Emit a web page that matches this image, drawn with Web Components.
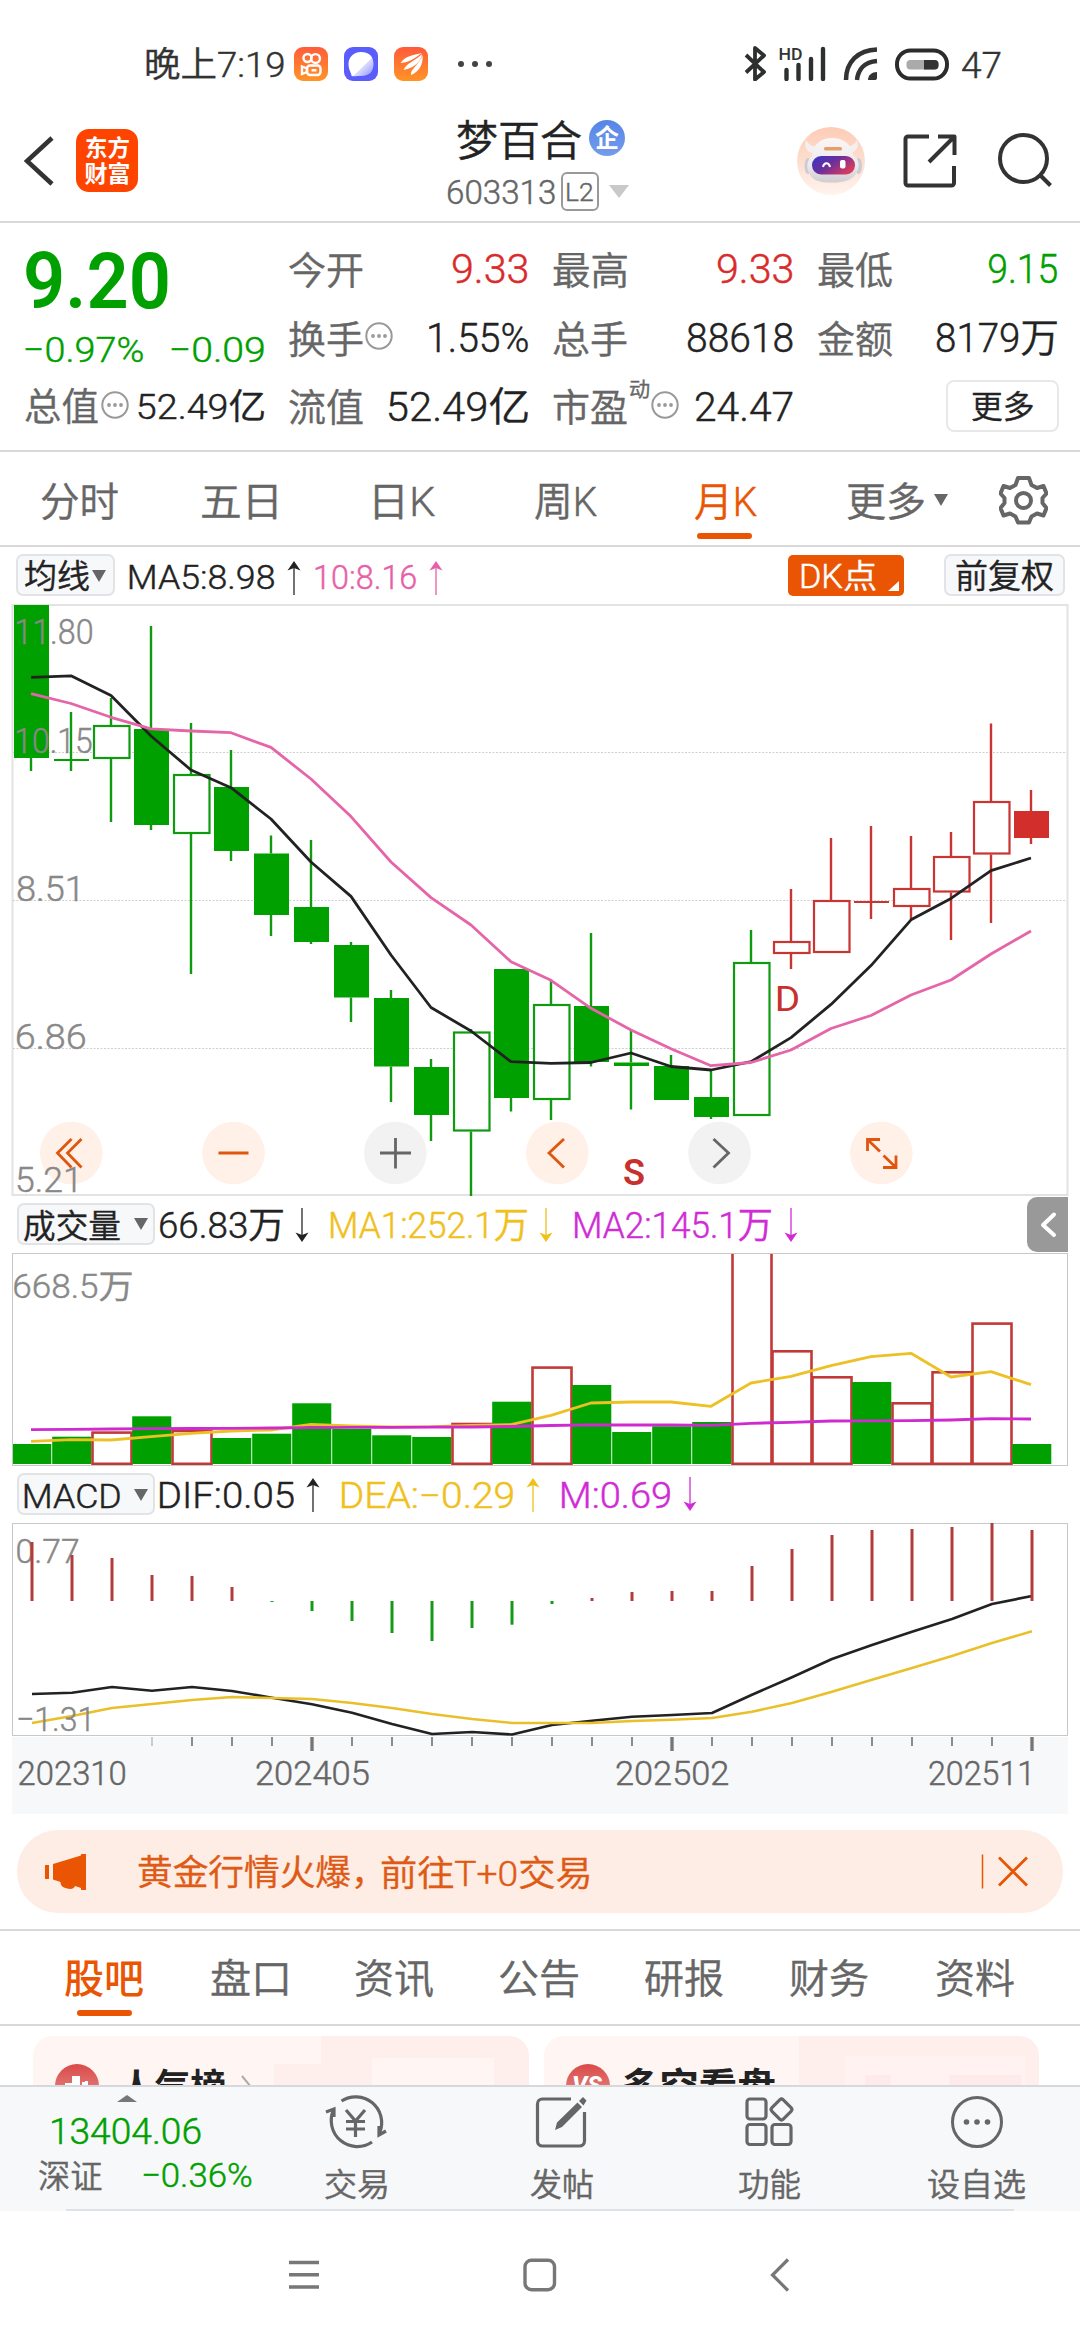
<!DOCTYPE html>
<html lang="zh-CN">
<head>
<meta charset="utf-8">
<title>梦百合 603313</title>
<style>
html,body{margin:0;padding:0;background:#fff}
body{width:1080px;height:2340px;overflow:hidden;font-family:Roboto,"Noto Sans CJK SC",sans-serif}
</style>
</head>
<body>
<stock-app></stock-app>
<script>
const FAMILY = 'Roboto,"Noto Sans CJK SC",sans-serif';
const BASE = 350;
const ctx = document.createElement('canvas').getContext('2d');
// Ink extents of a run of text, used to set labels to an exact optical width.
function ink(text, size, weight) {
  ctx.font = `${weight} ${size}px ${FAMILY}`;
  const m = ctx.measureText(text);
  return { left: -m.actualBoundingBoxLeft, width: m.actualBoundingBoxRight + m.actualBoundingBoxLeft };
}

// <fit-text w s b g wt c>: text of size s fitted to width w, baseline b below the row top, g after its neighbour.
class FitText extends HTMLElement {
  constructor() {
    super();
    this.attachShadow({ mode: 'open' }).innerHTML = `<style>
      :host{display:block;flex:none;white-space:nowrap;overflow:visible}
      span{display:inline-block;transform-origin:0 50%;white-space:nowrap}
    </style><span><slot></slot></span>`;
  }
  connectedCallback() {
    const n = (k, d) => this.hasAttribute(k) ? parseFloat(this.getAttribute(k)) : d;
    const s = n('s', 36), w = n('w', 100), wt = n('wt', BASE), b = n('b', 0);
    const k = ink(this.textContent, s, wt), f = w / k.width;
    Object.assign(this.style, {
      fontSize: s + 'px', lineHeight: s + 'px', height: s + 'px', width: w + 'px', fontWeight: wt,
      marginLeft: n('g', 0) + 'px', marginTop: (b - 0.842 * s) + 'px', color: this.getAttribute('c') || '',
      webkitTextStroke: wt === BASE ? '0.45px currentColor' : ''
    });
    this.shadowRoot.querySelector('span').style.transform = `translateX(${-k.left * f}px) scaleX(${f})`;
  }
}
customElements.define('fit-text', FitText);

// Icon drawings; each entry is [viewBox, markup].
const ICONS = {
  app1: ['0 0 34 34', `<defs><linearGradient id="a" x2="0" y2="1"><stop stop-color="#ff5c3c"/><stop offset="1" stop-color="#ff9426"/></linearGradient></defs><rect width="34" height="34" rx="9" fill="url(#a)"/><g fill="none" stroke="#fff" stroke-width="2.4"><circle cx="13.5" cy="11" r="4"/><circle cx="21.5" cy="11.5" r="4.4"/><rect x="13" y="18.500" width="13.500" height="9.500" rx="3"/><path d="M13 21.500l-5-2v7.500l5-2z"/></g><rect x="17.500" y="22" width="5" height="2.500" fill="#fff"/>`],
  app2: ['0 0 34 34', `<defs><linearGradient id="b" x2="1" y2="1"><stop offset=".58" stop-color="#fff"/><stop offset=".6" stop-color="#d9dcff"/><stop offset="1" stop-color="#8d90ff"/></linearGradient></defs><rect width="34" height="34" rx="9" fill="#5a5cfb"/><path d="M17 5c9 0 12.500 5 12.500 12S26 29 17 29c-4 0-6 .5-9.500 0 .5-2-3-6-3-12S9 5 17 5z" fill="url(#b)"/>`],
  app3: ['0 0 34 34', `<defs><linearGradient id="c" x2="0" y2="1"><stop stop-color="#ff5a3a"/><stop offset="1" stop-color="#ff9426"/></linearGradient></defs><rect width="34" height="34" rx="9" fill="url(#c)"/><path d="M6.500 16C11 9 19 8 28 6 23 9 18 15 6.500 16zM9.500 23c4-8 12-9 18.500-16-1 8-8 14-18.500 16zM17 28c-1-6 9-11 11.500-20 1 10-4 17-11.500 20z" fill="#fff"/>`],
  dots: ['0 0 36 8', `<g fill="#444"><circle cx="4" cy="4" r="3"/><circle cx="18" cy="4" r="3"/><circle cx="32" cy="4" r="3"/></g>`],
  bt: ['744 46 22 35', `<path d="M746 55l18 17-9 7.500V48l9 7.500-18 17" fill="none" stroke="#2e3030" stroke-width="3.800" stroke-linejoin="round"/>`],
  signal: ['779 46 47 35', `<text x="778.500" y="60" font-size="16" font-weight="500" textLength="24" lengthAdjust="spacingAndGlyphs" fill="#333">HD</text><path d="M786.500 70v9M798.500 65v14M811 59v20M823 49v30" stroke="#2e3030" stroke-width="4.400" stroke-linecap="round" fill="none"/>`],
  wifi: ['843 46 36 35', `<g fill="none" stroke="#333" stroke-width="4.500"><path d="M846 80C846 62 858 50 877 49.500"/><path d="M857 80C858 70 864 62 877 61"/></g><path d="M868 80c0-5 4-8 9-8v6c0 1.500-1 2-2.500 2z" fill="#333"/>`],
  battery: ['895 48 54 33', `<rect x="897" y="50.500" width="50" height="28" rx="13.500" fill="none" stroke="#2c2c2c" stroke-width="4"/><rect x="906.500" y="60" width="32" height="9.500" rx="4" fill="#aaa"/><path d="M924 60h10.500a4 4 0 014 4v1.500a4 4 0 01-4 4H924z" fill="#333"/>`],
  back: ['24 135 32 52', `<path d="M52 138L27 161l25 23" fill="none" stroke="#333" stroke-width="4.600"/>`],
  drop: ['0 0 20 13', `<path d="M0 0h20L10 13z" fill="#c9c9c9"/>`],
  robot: ['797 127 68 68', `<defs><linearGradient id="r" x2="0" y2="1"><stop stop-color="#fdccb6"/><stop offset=".55" stop-color="#fde0d2"/><stop offset="1" stop-color="#fff4ee"/></linearGradient><linearGradient id="v" x2="1" y2=".6"><stop stop-color="#3a35c8"/><stop offset=".5" stop-color="#6a2f9c"/><stop offset="1" stop-color="#d83a5e"/></linearGradient><linearGradient id="w" x2="0" y2="1"><stop stop-color="#fbf6f5"/><stop offset=".6" stop-color="#eceaee"/><stop offset="1" stop-color="#cfccd2"/></linearGradient></defs><circle cx="831" cy="161" r="34" fill="url(#r)"/><path d="M813 153c-7-1-9-7-7-13 3 5 6 7 11 6zM850 153c7-1 9-7 7-13-3 5-6 7-11 6z" fill="#f6efef"/><ellipse cx="808" cy="166" rx="3.500" ry="8" fill="#cfcbd2"/><ellipse cx="858.500" cy="166" rx="3.500" ry="8" fill="#cfcbd2"/><path d="M812 156c0-11 9-18 20-18s20 6 21 17c6 4 7 11 4 17-4 8-12 10.500-25 10.500S813 181 809 173c-3-6-2-13 3-17z" fill="url(#w)"/><rect x="824" y="147" width="18" height="3.400" rx="1.500" fill="#e3a06c"/><rect x="812" y="156" width="43" height="18.500" rx="9" fill="url(#v)"/><path d="M823 167c1-5 6-5 7 0" fill="none" stroke="#fff" stroke-width="2"/><rect x="840" y="160" width="5.500" height="8.500" rx="2" fill="#fff"/>`],
  share: ['903 133 56 56', `<path d="M929 136.500H908a2.500 2.500 0 00-2.500 2.500v44a2.500 2.500 0 002.500 2.500h43.500A2.500 2.500 0 00954 183v-17M929 162l25-25M938 136.500h16.500V155" fill="none" stroke="#333" stroke-width="4" stroke-linejoin="round"/>`],
  search: ['997 132 56 56', `<g fill="none" stroke="#333" stroke-width="4"><circle cx="1023.500" cy="158.500" r="23.500"/><path d="M1040 175l10.500 10.500"/></g>`],
  info: ['0 0 28 28', `<circle cx="14" cy="14" r="12.700" fill="none" stroke="#999" stroke-width="2"/><g fill="#999"><circle cx="8" cy="14" r="1.900"/><circle cx="14" cy="14" r="1.900"/><circle cx="20" cy="14" r="1.900"/></g>`],
  tri: ['0 0 14 12', `<path d="M0 0h14L7 12z" fill="#666"/>`],
  triup: ['0 0 20 7', `<path d="M0 7L10 0l10 7z" fill="#777"/>`],
  gear: ['999 475 49 50', `<g fill="none" stroke="#666" stroke-width="4" stroke-linejoin="round"><path d="M1018 478h11l2.500 7 5.500 3 6.500-2 3 7.500-4 4.500v5l4 5-3 7.500-6.500-2-5.500 3-2.500 6h-11l-2.500-6-5.500-3-6.500 2-3-7.500 4-5v-5l-4-4.500 3-7.500 6.500 2 5.500-3z"/><circle cx="1023.500" cy="500.500" r="7.500"/></g>`],
  corner: ['0 0 11 10', `<path d="M11 0v10H0z" fill="#fff"/>`],
  handle: ['1027 1197 41 56', `<path d="M1068 1197h-31a10 10 0 00-10 10v35a10 10 0 0010 10h31z" fill="#999"/><path d="M1054 1214.500l-11 10.500 11 10" fill="none" stroke="#fff" stroke-width="4" stroke-linecap="round" stroke-linejoin="round"/>`],
  horn: ['45 1853 42 38', `<path d="M45 1865h4v14h-4zM53 1864l28-8.500v-1.500h5v36h-5v-2l-6-2c-1 2.500-3.500 3.500-8 2.500s-6.500-3-6.500-6.500l-7.500-2.500z" fill="#ea5504"/>`],
  close: ['981 1853 48 37', `<path d="M982.500 1854.500v34" stroke="#ea5504" stroke-width="1.500"/><path d="M999 1857.500l28 28M1027 1857.500l-28 28" stroke="#ea5504" stroke-width="2.800" fill="none"/>`],
  rank: ['55 2064 44 22', `<defs><linearGradient id="k" x2="0" y2="1"><stop stop-color="#d94a48"/><stop offset="1" stop-color="#e89a98"/></linearGradient></defs><circle cx="77" cy="2086" r="22" fill="url(#k)"/><path d="M65 2090v-7h7v-7h8v14zM82 2082h3v-1h3v9h-6z" fill="#fff"/>`],
  vs: ['567 2064 44 22', `<defs><linearGradient id="k" x2="0" y2="1"><stop stop-color="#d94a48"/><stop offset="1" stop-color="#e89a98"/></linearGradient></defs><circle cx="589" cy="2086" r="22" fill="url(#k)"/><text x="573" y="2093" font-size="24" font-weight="800" font-style="italic" fill="#fff">VS</text>`],
  more: ['241 2074 12 22', `<path d="M242 2075l9 11-9 9" fill="none" stroke="#aaa" stroke-width="2"/>`],
  trade: ['325 2094 62 56', `<g fill="none" stroke="#666" stroke-width="3.200"><path d="M341.500 2101A26 26 0 01380 2132M372 2142A26 26 0 01333.500 2110"/><path d="M326 2112l8-3v8M386 2131l-7 4v-9"/><path d="M346 2110l9.500 11 9.500-11M355.500 2121v16M346 2121.500h19M346 2129h19"/></g>`],
  edit: ['536 2094 54 56', `<path d="M572 2099h-28.500a5 5 0 00-5 5v37a5 5 0 005 5h37a5 5 0 005-5v-29" fill="none" stroke="#666" stroke-width="3.200"/><path d="M556 2130l2-7.500 20.500-20 4.500 4.500-20 20zM580 2101l4-4 3.500 3.500-3 5z" fill="#666"/>`],
  func: ['744 2094 52 56', `<g fill="none" stroke="#666" stroke-width="3.200"><rect x="747" y="2099" width="19" height="20" rx="3"/><rect x="747" y="2124.500" width="19" height="20" rx="3"/><rect x="772" y="2124.500" width="19" height="20" rx="3"/><rect x="773.500" y="2101.500" width="16" height="16" rx="2.500" transform="rotate(45 781.500 2109.500)"/></g>`],
  add: ['948 2094 56 56', `<circle cx="976" cy="2122" r="24.500" fill="none" stroke="#666" stroke-width="3"/><g fill="#666"><circle cx="965.500" cy="2122" r="2.800"/><circle cx="976" cy="2122" r="2.800"/><circle cx="986.500" cy="2122" r="2.800"/></g>`],
  menu: ['289 2258 30 34', `<path d="M289 2262.500h30M289 2274.700h30M289 2287h30" stroke="#777" stroke-width="3.400"/>`],
  home: ['522 2258 36 34', `<rect x="525" y="2260.200" width="29.500" height="29.500" rx="6.500" fill="none" stroke="#777" stroke-width="3.400"/>`],
  prev: ['770 2257 21 36', `<path d="M788 2259.500l-15.500 15.500 15.500 15.500" fill="none" stroke="#777" stroke-width="3.200"/>`],
  up: ['0 0 14 34', `<path d="M7 3v31" stroke="currentColor" stroke-width="1.600" opacity=".8"/><path d="M7 0l6.500 9.500L7 7 .5 9.500z" fill="currentColor"/>`],
  down: ['0 0 14 34', `<path d="M7 0v31" stroke="currentColor" stroke-width="1.600" opacity=".8"/><path d="M7 34L.5 24.500 7 27l6.500-2.500z" fill="currentColor"/>`]
};
// <ui-icon n g t c>: one drawing at its natural size, g after its neighbour and t below the row top.
class UiIcon extends HTMLElement {
  connectedCallback() {
    if (this.shadowRoot) return;
    const [vb, body] = ICONS[this.getAttribute('n')], p = vb.split(' ');
    this.attachShadow({ mode: 'open' }).innerHTML = `<style>:host{display:block;flex:none;width:${p[2]}px;height:${p[3]}px;margin-left:${this.getAttribute('g') || 0}px;margin-top:${this.getAttribute('t') || 0}px;color:${this.getAttribute('c') || 'inherit'}}svg{display:block}</style><svg width="${p[2]}" height="${p[3]}" viewBox="${vb}">${body}</svg>`;
  }
}
customElements.define('ui-icon', UiIcon);

const define = (name, css, html) => customElements.define(name, class extends HTMLElement {
  constructor() {
    super();
    this.attachShadow({ mode: 'open' }).innerHTML = `<style>:host{display:flex;align-items:flex-start;box-sizing:border-box;flex:none}${css}</style>${html}`;
  }
});

define('status-bar', ':host{height:112px;color:#333}', `
  <fit-text w="138" s="35" b="77.500" g="146">晚上7:19</fit-text>
  <ui-icon n="app1" g="10" t="47"></ui-icon><ui-icon n="app2" g="16" t="47"></ui-icon><ui-icon n="app3" g="16" t="47"></ui-icon>
  <ui-icon n="dots" g="29" t="60"></ui-icon><ui-icon n="bt" g="251" t="46"></ui-icon><ui-icon n="signal" g="13" t="46"></ui-icon>
  <ui-icon n="wifi" g="17" t="46"></ui-icon><ui-icon n="battery" g="16" t="48"></ui-icon>
  <fit-text w="39" s="36" b="78" g="13">47</fit-text>`);

define('app-header', `:host{height:111px;border-bottom:2px solid #d8d8d8}
  .logo{width:62px;height:63px;border-radius:13px;background:#ff4400;margin:17px 0 0 20px;display:flex;flex-direction:column;align-items:center;color:#fff}
  .mid{width:181px;margin-left:310px}.r{display:flex;align-items:flex-start}
  .co{width:36px;height:36px;border-radius:50%;background:linear-gradient(#5585e8,#759cea);margin:8px 0 0 8px;color:#fff;display:flex;justify-content:center}
  .l2{width:38px;height:39px;border:2px solid #999;border-radius:6px;box-sizing:border-box;margin:-1px 0 0 6px;display:flex}`, `
  <ui-icon n="back" g="24" t="23"></ui-icon>
  <div class="logo"><fit-text w="43" s="23" wt="700" b="27">东方</fit-text><fit-text w="45" s="23" wt="700" b="22.500">财富</fit-text></div>
  <div class="mid"><div class="r" style="height:61px"><fit-text w="124" s="42" b="44.500" g="9" c="#222">梦百合</fit-text><div class="co"><fit-text w="24" s="25" wt="700" b="27">企</fit-text></div></div>
  <div class="r"><fit-text w="107" s="33" b="31" c="#666">603313</fit-text><div class="l2"><fit-text w="26" s="26.500" b="27.500" g="4" c="#666">L2</fit-text></div><ui-icon n="drop" g="10" t="12"></ui-icon></div></div>
  <ui-icon n="robot" g="168" t="15"></ui-icon><ui-icon n="share" g="38" t="21"></ui-icon><ui-icon n="search" g="38" t="20"></ui-icon>`);

define('quote-panel', `:host{height:229px;padding-top:1px;border-bottom:2px solid #d8d8d8;color:#222}
  .a{width:264px;height:226px}.r{display:flex;align-items:flex-start}.k{width:239px;height:226px;margin-left:25px}.v{width:240px;margin-left:25px;height:226px}
  .r.x{justify-content:space-between}.l{display:flex;align-items:flex-start;color:#666}
  .btn{width:113px;height:52px;border:2px solid #e8e8e8;border-radius:8px;box-sizing:border-box;display:flex;justify-content:center}`, `
  <div class="a"><div class="r" style="height:100px"><fit-text w="142" s="77" wt="600" b="84.500" g="26" c="#00a000">9.20</fit-text></div>
    <div class="r" style="height:60px;color:#00a000"><fit-text w="118" s="35.500" b="38.500" g="25">−0.97%</fit-text><fit-text w="93" s="35.500" b="38.500" g="28">−0.09</fit-text></div>
    <div class="r"><fit-text w="73" s="38" b="36" g="25" c="#666">总值</fit-text><ui-icon n="info" g="3" t="7"></ui-icon><fit-text w="126" s="35" b="35.500" g="9">52.49亿</fit-text></div></div>
  <div class="k"><div class="r x" style="height:69px"><div class="l"><fit-text w="74" s="38" b="59.500">今开</fit-text></div><fit-text w="75" s="40.500" b="59.500" c="#d92b2b">9.33</fit-text></div>
    <div class="r x" style="height:69px"><div class="l"><fit-text w="74" s="38" b="59.500">换手</fit-text><ui-icon n="info" g="2" t="29"></ui-icon></div><fit-text w="99" s="40" b="59.500">1.55%</fit-text></div>
    <div class="r x"><div class="l"><fit-text w="74" s="38" b="58.500">流值</fit-text></div><fit-text w="139" s="40" b="59.500">52.49亿</fit-text></div></div>
  <div class="v"><div class="r x" style="height:69px"><div class="l"><fit-text w="74" s="38" b="59.500">最高</fit-text></div><fit-text w="75" s="40.500" b="59.500" c="#d92b2b">9.33</fit-text></div>
    <div class="r x" style="height:69px"><div class="l"><fit-text w="74" s="38" b="59.500">总手</fit-text></div><fit-text w="105" s="40" b="59.500">88618</fit-text></div>
    <div class="r x"><div class="l"><fit-text w="74" s="38" b="58.500">市盈</fit-text><fit-text w="19" s="20" b="35" g="3">动</fit-text><ui-icon n="info" g="2" t="29"></ui-icon></div><fit-text w="97" s="40" b="59.500">24.47</fit-text></div></div>
  <div class="v" style="width:239px"><div class="r x" style="height:69px"><div class="l"><fit-text w="74" s="38" b="59.500">最低</fit-text></div><fit-text w="68" s="40.500" b="59.500" c="#00a000">9.15</fit-text></div>
    <div class="r x" style="height:69px"><div class="l"><fit-text w="74" s="38" b="59.500">金额</fit-text></div><fit-text w="120" s="40" b="59.500">8179万</fit-text></div>
    <div class="r" style="justify-content:flex-end;margin-right:-2px"><div class="btn" style="margin-top:18px"><fit-text w="61" s="31.500" b="36.500">更多</fit-text></div></div></div>`);

define('period-tabs', `:host{height:95px;border-bottom:2px solid #d8d8d8;color:#666}
  .on{color:#ea5504;margin-left:98px;width:63px}.on i{display:block;width:55px;height:6px;border-radius:3px;background:#ea5504;margin:10px 0 0 2px}`, `
  <fit-text w="77" s="40" b="65" g="41">分时</fit-text><fit-text w="75" s="40" b="65" g="84">五日</fit-text><fit-text w="60" s="40" b="65" g="98">日K</fit-text>
  <fit-text w="62" s="40" b="65" g="100">周K</fit-text><div class="on"><fit-text w="62" s="40" b="65">月K</fit-text><i></i></div>
  <fit-text w="77" s="40" b="65" g="89">更多</fit-text><ui-icon n="tri" g="10" t="42"></ui-icon><ui-icon n="gear" g="51" t="23"></ui-icon>`);

const CHIP = `.chip{height:42px;border:2px solid #e1e3e7;background:#f7f8fa;border-radius:7px;box-sizing:border-box;display:flex;align-items:flex-start;flex:none;color:#222}`;
define('ma-bar', `:host{height:57px;color:#222}${CHIP}
  .dk{width:116px;height:41px;border-radius:5px;background:#ea5504;margin:8px 0 0 345px;display:flex;align-items:flex-start}`, `
  <div class="chip" style="width:99px;margin:7px 0 0 16px"><fit-text w="64" s="33" b="31.500" g="7">均线</fit-text><ui-icon n="tri" g="3" t="14"></ui-icon></div>
  <fit-text w="145" s="33" b="41.500" g="14">MA5:8.98</fit-text><ui-icon n="up" g="13" t="14"></ui-icon>
  <fit-text w="101" s="33" b="41.500" g="14" c="#e85fa8">10:8.16</fit-text><ui-icon n="up" g="13" t="14" c="#e85fa8"></ui-icon>
  <div class="dk"><fit-text w="75" s="33" b="33" g="13" c="#fff">DK点</fit-text><ui-icon n="corner" g="12" t="26"></ui-icon></div>
  <div class="chip" style="width:121px;margin:7px 0 0 40px"><fit-text w="97" s="33" b="31.500" g="10">前复权</fit-text></div>`);

const X = i => 31 + 40 * i;
const G = '#00a000', R = '#c83532';
const label = (t, x, y, w, s, c = '#888', wt = BASE) => {
  const k = ink(t, s, wt), f = w / k.width;
  return `<text transform="translate(${x - k.left * f} ${y}) scale(${f} 1)" font-size="${s}" font-weight="${wt}" fill="${c}"${wt === BASE ? ` stroke="${c}" stroke-width=".45"` : ''}>${t}</text>`;
};
const line = (ys, c, w = 2.8, dx = 0) => `<polyline points="${ys.map((y, i) => `${X(i) + dx},${y}`).join(' ')}" fill="none" stroke="${c}" stroke-width="${w}" stroke-linejoin="round"/>`;
const chart = (name, top, h, draw) => customElements.define(name, class extends HTMLElement {
  constructor() {
    super();
    this.attachShadow({ mode: 'open' }).innerHTML = `<style>:host{display:block;flex:none;height:${h}px}svg{display:block}</style><svg width="1080" height="${h}" viewBox="0 ${top} 1080 ${h}">${draw()}</svg>`;
  }
});

// kind, high, body top, body bottom, low
const CANDLES = [['s',605,605,758,771],['l',712,759,761,771],['h',698,725,759,822],['s',626,729,825,830],['h',723,774,834,974],['s',750,787,851,861],['s',835.5,853.5,915,936],['s',840,907,942,944],['s',942,945,997.5,1022],['s',990,998,1066.5,1102],['s',1059,1067,1115,1141],['h',1029,1031.5,1131.5,1196],['s',969,969,1098,1111.5],['h',981,1004,1100,1120],['s',933,1006,1062,1066.5],['s',1030,1062.500,1066,1109.5],['s',1055,1066,1100,1100],['s',1070,1097,1117,1119],['h',930,962,1116,1116],['r',889,941,954,969],['r',838,900,953,953],['m',826,901,903,919],['r',836,888,907,919],['r',832,856,892.5,940],['r',723.5,801,854.5,923],['f',790,811,838,844]];
const MA5 = [677.4,675.8,695.6,736,770,787.7,819,862,896.4,955,1007.5,1031,1061.7,1063.3,1062.5,1053,1066.5,1070,1061.7,1037.6,1004.4,965.6,919.8,898.4,870.7,858];
const MA10 = [693.6,703.5,717.3,728.8,731,732.7,747.4,779,816.6,862,897.6,925,961.7,980.3,1008.3,1030,1048.7,1065.7,1062.5,1050,1028.5,1015.5,995,980,954,931];
chart('k-chart', 604, 593, () => {
  let o = `<rect x="12.500" y="605" width="1055" height="590" fill="none" stroke="#e3e3e3" stroke-width="2"/>`;
  for (const y of [752.5, 900.5, 1048.5]) o += `<path d="M13 ${y}H1067" stroke="#d0d0d0" stroke-width="1" stroke-dasharray="2 1.500"/>`;
  CANDLES.forEach(([k, hi, a, b, lo], i) => {
    const x = X(i), c = 'rmf'.includes(k) ? (k === 'f' ? '#d22e2b' : R) : G, hollow = 'hr'.includes(k);
    o += `<path d="M${x} ${hi}V${a}M${x} ${b}V${lo}" stroke="${k === 'f' ? R : c === G ? '#109a10' : c}" stroke-width="2.400"/>`;
    o += hollow ? `<rect x="${x - 17}" y="${a + 1}" width="35.500" height="${b - a - 2}" fill="#fff" stroke="${c === G ? '#109a10' : c}" stroke-width="2.200"/>`
      : `<rect x="${x - 17}" y="${a}" width="35" height="${b - a}" fill="${c}"/>`;
  });
  o += line(MA5, '#222') + line(MA10, '#e565a8');
  [71.3, 233.5, 395.3, 557.3, 719.5, 881.3].forEach((x, i) => o += `<circle cx="${x}" cy="1153" r="31.300" fill="${i === 2 || i === 4 ? '#f2f2f2' : '#fff0e8'}"/>`);
  o += `<g fill="none" stroke-width="2.800" stroke="#e0560f"><path d="M71.500 1139L57.500 1153l14 14.500M81.500 1139L67.500 1153l14 14.500M218.500 1153h30M564 1139l-15 14 15 14.500M867.500 1151v-11.500h12.500M868 1140l12 11.500M896 1155.500v12H883M895.500 1167l-12-11.500"/><path stroke="#666" d="M380 1153h31M395.500 1138v30.500M713.500 1139l15 14-15 14.500"/></g>`;
  o += label('11.80', 17, 644, 75, 35.5) + label('10.15', 17, 752.5, 75, 35.5) + label('8.51', 17, 901, 61, 35.5) + label('6.86', 17, 1048.5, 68, 35.5) + label('5.21', 17, 1192, 59, 35.5);
  return o + label('D', 777, 1011, 21, 35, '#c8302e', 400) + label('S', 624, 1184.500, 20, 36, '#c8302e', 600);
});

define('volume-bar', `:host{height:56px;color:#222;margin-right:12px}${CHIP}`, `
  <div class="chip" style="width:138px;margin:6px 0 0 16.500px"><fit-text w="96" s="33" b="32.500" g="5">成交量</fit-text><ui-icon n="tri" g="14" t="13"></ui-icon></div>
  <fit-text w="123" s="36" b="41.500" g="5.500">66.83万</fit-text><ui-icon n="down" g="12" t="11"></ui-icon>
  <fit-text w="196" s="36" b="41.500" g="21.500" c="#f0c01c">MA1:252.1万</fit-text><ui-icon n="down" g="12" t="11" c="#f0c01c"></ui-icon>
  <fit-text w="196" s="36" b="41.500" g="22.500" c="#d02bd6">MA2:145.1万</fit-text><ui-icon n="down" g="13" t="11" c="#d02bd6"></ui-icon>
  <ui-icon n="handle" g="229" t="0"></ui-icon>`);

const VOL = [1444,1436.7,-1431.3,1416.3,-1429.7,1438,1433.7,1403.3,1429,1435.3,1437,-1422.7,1401.7,-1366.3,1385,1432,1426.3,1422,-1250,-1350,-1376,1382,-1402,-1371,-1322.3,1444];
chart('volume-chart', 1253, 215, () => {
  let o = '';
  VOL.forEach((v, i) => {
    const x = X(i) + .5;
    o += v > 0 ? `<rect x="${x - (i ? 19.3 : 18.5)}" y="${v}" width="${i ? 39.1 : 38.3}" height="${1464 - v}" fill="${G}"/>`
      : `<rect x="${x - 19}" y="${-v + 1.3}" width="39" height="${1464 + v - 1.5}" fill="#fff" stroke="#c23a38" stroke-width="2.600"/>`;
  });
  o += line([1441.3,1439.7,1440,1436.7,1433.3,1431,1430,1424.3,1426,1427,1426.7,1425.3,1424.7,1415.3,1403,1402,1402,1406.3,1383,1376.3,1365.7,1356.7,1353.3,1377,1371.7,1384.7], '#edc126');
  o += line([1429.7,1429.3,1429,1428.7,1428.5,1428.3,1428,1427.6,1427.3,1427.3,1427.2,1427,1426.5,1425.5,1424.8,1425,1425,1425.3,1423.3,1422.3,1421,1420.8,1420.7,1420,1418.7,1419], '#cf2ad0');
  o += `<rect x="12.500" y="1253.500" width="1055" height="212" fill="none" stroke="#c8c8c8"/>`;
  return o + label('668.5万', 14.5, 1298, 117, 33);
});

define('macd-bar', `:host{height:55px;color:#222}${CHIP}`, `
  <div class="chip" style="width:138px;margin:5px 0 0 16.500px"><fit-text w="96" s="33" b="32.500" g="5">MACD</fit-text><ui-icon n="tri" g="14" t="14"></ui-icon></div>
  <fit-text w="134" s="36" b="40" g="5">DIF:0.05</fit-text><ui-icon n="up" g="12" t="10"></ui-icon>
  <fit-text w="171" s="36" b="40" g="22.500" c="#f0c01c">DEA:−0.29</fit-text><ui-icon n="up" g="13" t="10" c="#f0c01c"></ui-icon>
  <fit-text w="108" s="36" b="40" g="22" c="#d02bd6">M:0.69</fit-text><ui-icon n="down" g="13" t="9" c="#d02bd6"></ui-icon>`);

const MACD = [1542,1555,1558,1575,1576,1587,1602,1611,1621,1633,1641,1628,1624.7,1604,1598,1592,1591,1591,1566,1549,1535,1530,1529,1527,1523,1530];
chart('macd-chart', 1523, 292, () => {
  let o = `<rect x="12" y="1737" width="1056" height="77" fill="#f7f8fa"/><rect x="12.500" y="1523.500" width="1055" height="212" fill="none" stroke="#c8c8c8"/>`;
  o += line([1694,1692.7,1687,1690.7,1687,1691,1697.7,1704.3,1712.7,1724,1734,1732,1734.5,1725,1720.7,1716.7,1715,1713,1694.7,1677.3,1659,1645,1631.7,1619,1604,1596], '#222', 2.6, 1);
  o += line([1723,1716,1708,1704,1700,1697,1698,1699,1703,1708,1714,1719,1723,1723,1723,1721,1719.7,1718,1711.7,1703,1691.7,1679.7,1668,1656,1643,1631.3], '#e9c02a', 2.6, 1);
  o += label('0.77', 16.5, 1562.7, 61.5, 33.5) + label('−1.31', 18, 1730.7, 71, 33.5);
  MACD.forEach((v, i) => o += `<path d="M${X(i) + 1} 1601V${v}" stroke="${v > 1601 ? '#149a14' : '#b23c3a'}" stroke-width="3"/>`);
  for (let i = 3; i < 26; i++) { const m = (i - 7) % 9 === 0; o += `<path d="M${X(i) + 1} 1737v${m ? 14 : 9}" stroke="${i === 3 ? '#ccc' : m ? '#777' : '#8c8c8c'}" stroke-width="${m ? 3.4 : 2}"/>`; }
  return o + label('202310', 18.5, 1785, 107, 33, '#666') + label('202405', 256, 1785, 112.5, 33, '#666') + label('202502', 616, 1785, 112, 33, '#666') + label('202511', 929, 1785, 100, 33, '#666');
});

define('promo-banner', `:host{height:83px;margin:15px 17px 16px;border-radius:41px;background:#fdede4;color:#ea5504}`, `
  <ui-icon n="horn" g="28" t="23"></ui-icon><fit-text w="225" s="35.500" b="56" g="51" c="#df5a14">黄金行情火爆，</fit-text><fit-text w="208.500" s="35" b="56" g="18" c="#df5a14">前往T+0交易</fit-text><ui-icon n="close" g="391.500" t="23"></ui-icon>`);

define('info-tabs', `:host{height:97px;border-top:2px solid #d8d8d8;border-bottom:2px solid #d8d8d8;color:#666;padding-left:65px;gap:67.300px}
  .on{color:#ea5504}.on i{display:block;width:55px;height:6px;border-radius:3px;background:#ea5504;margin:10px 0 0 12px}`, `
  <div class="on"><fit-text w="78" s="40" wt="500" b="63">股吧</fit-text><i></i></div><fit-text w="76" s="40" b="63" g="1">盘口</fit-text><fit-text w="78" s="40" b="63">资讯</fit-text>
  <fit-text w="78" s="40" b="63">公告</fit-text><fit-text w="78" s="40" b="63">研报</fit-text><fit-text w="78" s="40" b="63">财务</fit-text><fit-text w="78" s="40" b="63">资料</fit-text>`);

define('feed-cards', `:host{height:59px;overflow:hidden;padding:10px 0 0 33px;gap:15px}
  div{height:80px;border-radius:20px;display:flex;align-items:flex-start;flex:none;color:#222;box-sizing:border-box;padding-left:22px}
  .a{width:496px;background:linear-gradient(#fff5f3,#fff5f3) 339px 22px/122px 100% no-repeat,linear-gradient(#feefed,#feefed) 241px 28px/60px 100% no-repeat,linear-gradient(90deg,#fff5f2 288px,#feefed 288px)}
  .b{width:495px;background:linear-gradient(#feeae8,#feeae8) 321px 39px/26px 100% no-repeat,linear-gradient(#feeae8,#feeae8) 405px 39px/72px 100% no-repeat,linear-gradient(#fff2f0,#fff2f0) 301px 20px/180px 100% no-repeat,linear-gradient(90deg,#fff5f2 255px,#feeeec 255px)}`, `
  <div class="a"><ui-icon n="rank" t="28"></ui-icon><fit-text w="105" s="37" wt="700" b="65.500" g="21">人气榜</fit-text><ui-icon n="more" g="16" t="39"></ui-icon></div>
  <div class="b"><ui-icon n="vs" t="28"></ui-icon><fit-text w="152" s="39" wt="700" b="66" g="13">多空看盘</fit-text></div>`);

define('bottom-bar', `:host{height:126px;background:#f7f8fa;border-top:2px solid #d5d8dc;color:#666;position:relative}
  section{flex:none;display:flex;flex-direction:column;align-items:center}.idx{width:252px;align-items:flex-start;color:#00a000}.r{display:flex;align-items:flex-start}
  hr{position:absolute;left:66px;right:66px;bottom:0;height:2px;border:0;margin:0;background:#dfe2e6}`, `
  <section class="idx"><ui-icon n="triup" g="116.500" t="8"></ui-icon><fit-text w="149" s="36" b="42" g="51.500">13404.06</fit-text>
    <div class="r"><fit-text w="63" s="32.500" b="39" g="39" c="#666">深证</fit-text><fit-text w="109" s="33.500" b="38" g="41">−0.36%</fit-text></div></section>
  <section style="width:62px;margin-left:73px"><ui-icon n="trade" t="7"></ui-icon><fit-text w="62" s="32" b="45.500">交易</fit-text></section>
  <section style="width:62px;margin-left:144px"><ui-icon n="edit" t="7"></ui-icon><fit-text w="62" s="32" b="45.500">发帖</fit-text></section>
  <section style="width:61px;margin-left:146px"><ui-icon n="func" t="7"></ui-icon><fit-text w="61" s="32" b="45.500">功能</fit-text></section>
  <section style="width:97px;margin-left:128px"><ui-icon n="add" t="7"></ui-icon><fit-text w="97" s="32" b="45.500">设自选</fit-text></section><hr>`);

define('nav-bar', ':host{height:129px}', `<ui-icon n="menu" g="289" t="47"></ui-icon><ui-icon n="home" g="203" t="47"></ui-icon><ui-icon n="prev" g="212" t="46"></ui-icon>`);

define('stock-app', ':host{flex-direction:column;align-items:stretch;width:1080px;height:2340px;background:#fff}', `
  <status-bar></status-bar><app-header></app-header><quote-panel></quote-panel><period-tabs></period-tabs><ma-bar></ma-bar>
  <k-chart></k-chart><volume-bar></volume-bar><volume-chart></volume-chart><macd-bar></macd-bar><macd-chart></macd-chart>
  <promo-banner></promo-banner><info-tabs></info-tabs><feed-cards></feed-cards><bottom-bar></bottom-bar><nav-bar></nav-bar>`);
</script>
</body>
</html>
